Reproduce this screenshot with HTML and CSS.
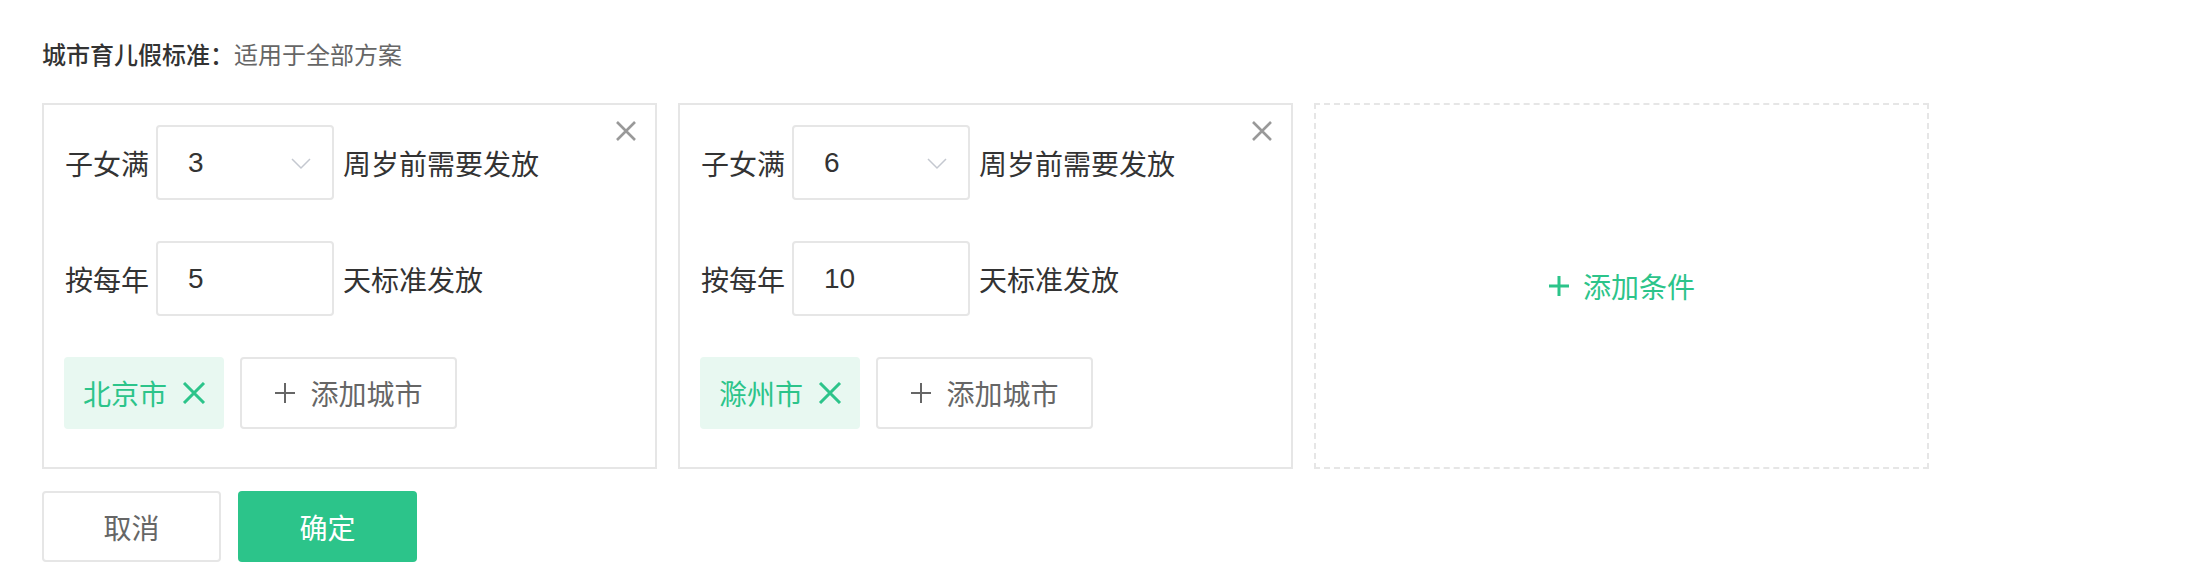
FILE: index.html
```html
<!DOCTYPE html>
<html lang="zh-CN">
<head>
    <meta charset="UTF-8">
    <title>城市育儿假标准</title>
    <link rel="stylesheet" href="styles.css">
</head>
<body>
<div class="page">
    <div class="title">
        <span class="title-main">城市育儿假标准：</span><span class="title-sub">适用于全部方案</span>
    </div>

    <div class="rules">
        <div class="rule-card">
            <span class="close">
                <svg width="22" height="22" viewBox="0 0 22 22"><path d="M2 2 L20 20 M20 2 L2 20" stroke="#999" stroke-width="2.6" fill="none"/></svg>
            </span>
            <div class="row">
                <span class="label">子女满</span>
                <div class="field">
                    <span>3</span>
                    <svg class="chevron" width="20" height="12" viewBox="0 0 20 12"><path d="M1 1 L10 10 L19 1" stroke="#c4c8d0" stroke-width="1.5" fill="none"/></svg>
                </div>
                <span class="after">周岁前需要发放</span>
            </div>
            <div class="row">
                <span class="label">按每年</span>
                <div class="field"><span>5</span></div>
                <span class="after">天标准发放</span>
            </div>
            <div class="row">
                <span class="tag">北京市
                    <svg width="24" height="22" viewBox="0 0 24 22"><path d="M2 1 L22 21 M22 1 L2 21" stroke="#2cc48a" stroke-width="3" fill="none"/></svg>
                </span>
                <span class="add-city">
                    <svg width="22" height="22" viewBox="0 0 22 22"><path d="M11 1 V21 M1 11 H21" stroke="#666" stroke-width="2" fill="none"/></svg>
                    添加城市
                </span>
            </div>
        </div>

        <div class="rule-card">
            <span class="close">
                <svg width="22" height="22" viewBox="0 0 22 22"><path d="M2 2 L20 20 M20 2 L2 20" stroke="#999" stroke-width="2.6" fill="none"/></svg>
            </span>
            <div class="row">
                <span class="label">子女满</span>
                <div class="field">
                    <span>6</span>
                    <svg class="chevron" width="20" height="12" viewBox="0 0 20 12"><path d="M1 1 L10 10 L19 1" stroke="#c4c8d0" stroke-width="1.5" fill="none"/></svg>
                </div>
                <span class="after">周岁前需要发放</span>
            </div>
            <div class="row">
                <span class="label">按每年</span>
                <div class="field"><span>10</span></div>
                <span class="after">天标准发放</span>
            </div>
            <div class="row">
                <span class="tag">滁州市
                    <svg width="24" height="22" viewBox="0 0 24 22"><path d="M2 1 L22 21 M22 1 L2 21" stroke="#2cc48a" stroke-width="3" fill="none"/></svg>
                </span>
                <span class="add-city">
                    <svg width="22" height="22" viewBox="0 0 22 22"><path d="M11 1 V21 M1 11 H21" stroke="#666" stroke-width="2" fill="none"/></svg>
                    添加城市
                </span>
            </div>
        </div>

        <div class="add-rule">
            <svg width="22" height="22" viewBox="0 0 22 22"><path d="M11 1 V21 M1 11 H21" stroke="#2cc48a" stroke-width="3" fill="none"/></svg>
            添加条件
        </div>
    </div>

    <div class="actions">
        <button class="btn btn-cancel">取消</button>
        <button class="btn btn-ok">确定</button>
    </div>
</div>
</body>
</html>
```

FILE: styles.css
```css
body {
    margin: 0;
    background-color: #fff;
    font-family: "Liberation Sans", "Noto Sans CJK SC", sans-serif;
    color: #333;
}

.page {
    padding: 39px 0 0 42px;
}

.title {
    font-size: 24px;
    line-height: 34px;
    height: 34px;
}

.title-main {
    font-weight: 500;
    color: #333;
}

.title-sub {
    color: #666;
}

.rules {
    display: flex;
    gap: 21px;
    margin-top: 30px;
}

.rule-card,
.add-rule {
    box-sizing: border-box;
    width: 615px;
    height: 366px;
}

.rule-card {
    position: relative;
    border: 2px solid #e6e6e6;
    padding: 20px 22px 20px 20px;
    display: flex;
    flex-direction: column;
    gap: 41px;
}

.close {
    position: absolute;
    top: 15px;
    right: 18px;
    display: flex;
}

.row {
    display: flex;
    align-items: center;
    font-size: 28px;
    height: 75px;
}

.row:last-child {
    height: 72px;
}

.label {
    width: 84px;
    margin: 0 7px 0 1px;
}

.field {
    box-sizing: border-box;
    width: 178px;
    height: 75px;
    border: 2px solid #e6e6e6;
    border-radius: 4px;
    padding: 0 21px 0 30px;
    display: flex;
    align-items: center;
    justify-content: space-between;
    color: #333;
}

.chevron {
    margin-top: 2px;
}

.after {
    margin-left: 9px;
}

.tag {
    box-sizing: border-box;
    height: 72px;
    width: 160px;
    padding: 0 18px 0 19px;
    background-color: #e8f8f1;
    border-radius: 4px;
    color: #2cc48a;
    display: flex;
    align-items: center;
    justify-content: space-between;
}

.add-city {
    box-sizing: border-box;
    height: 72px;
    width: 217px;
    margin-left: 16px;
    border: 2px solid #e6e6e6;
    border-radius: 4px;
    color: #666;
    display: flex;
    align-items: center;
    justify-content: center;
    gap: 14px;
}

.add-rule {
    border: 2px dashed #e6e6e6;
    display: flex;
    align-items: center;
    justify-content: center;
    gap: 13px;
    font-size: 28px;
    color: #2cc48a;
}

.actions {
    display: flex;
    gap: 17px;
    margin-top: 22px;
}

.btn {
    box-sizing: border-box;
    width: 179px;
    height: 71px;
    border-radius: 4px;
    font-family: "Liberation Sans", "Noto Sans CJK SC", sans-serif;
    font-size: 28px;
    cursor: pointer;
}

.btn-cancel {
    background-color: #fff;
    border: 2px solid #e6e6e6;
    color: #666;
}

.btn-ok {
    background-color: #2cc48a;
    border: none;
    color: #fff;
}
```
